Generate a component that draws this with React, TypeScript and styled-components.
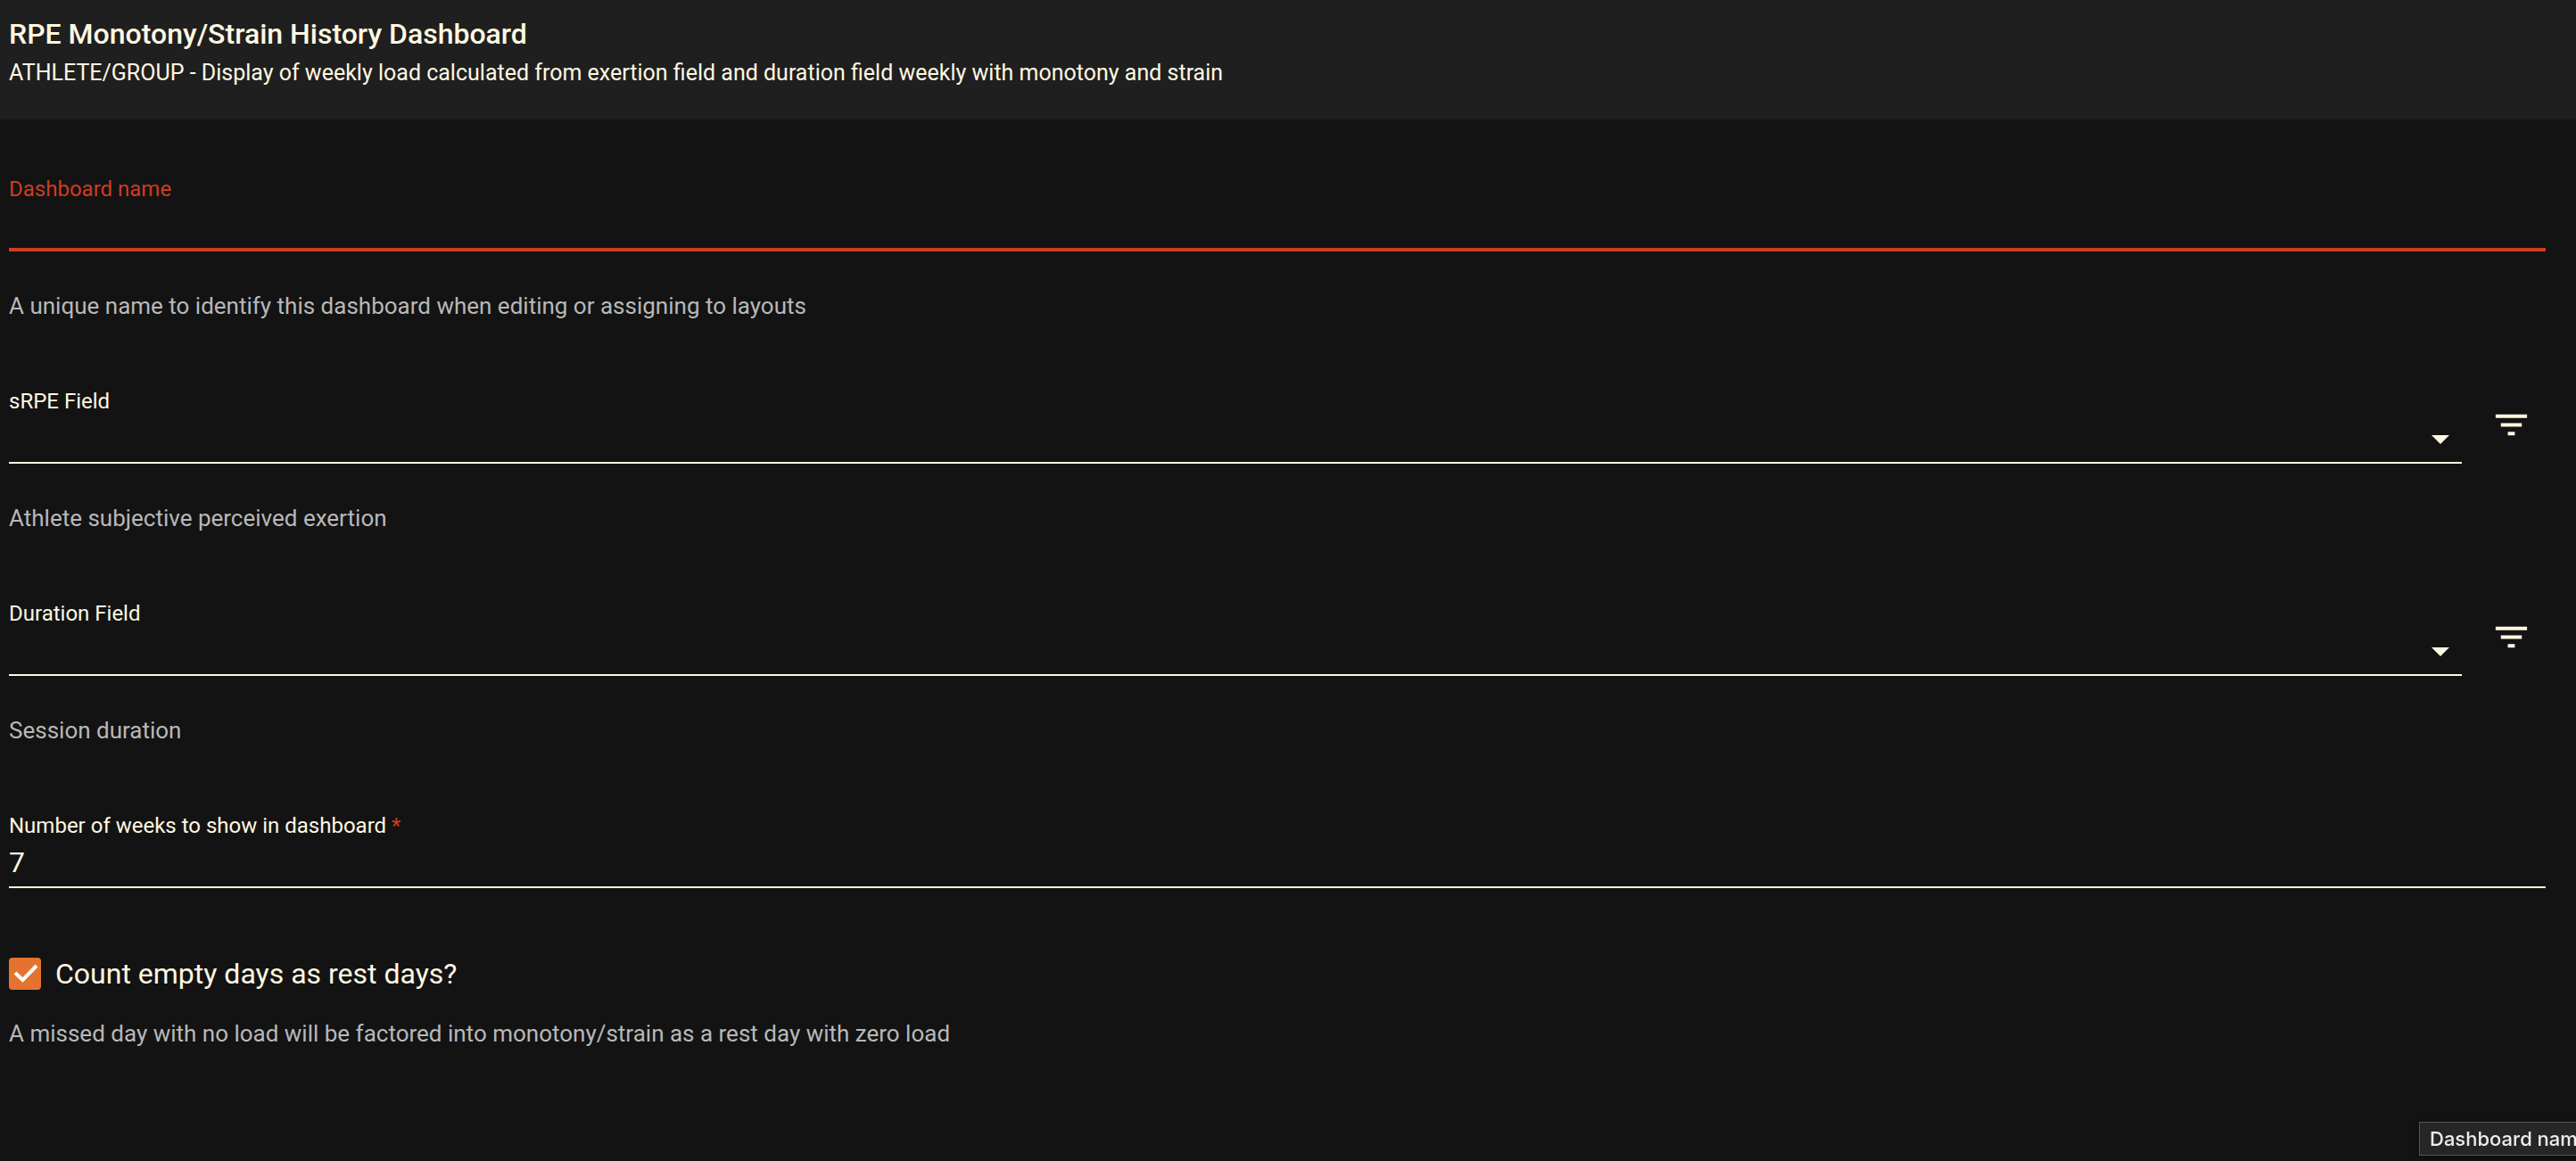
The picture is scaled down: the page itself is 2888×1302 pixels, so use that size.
import React, { useId, useState } from "react";
import styled, { createGlobalStyle, css } from "styled-components";

const color = {
  page: "#131313",
  header: "#1f1f1f",
  text: "#fff8e1",
  muted: "#b8b8b8",
  error: "#cf3c1f",
  accent: "#e57330",
};

const GlobalStyle = createGlobalStyle`
  *, *::before, *::after { box-sizing: border-box; }
  html { background: ${color.page}; }
  body {
    margin: 0;
    min-height: 100vh;
    overflow-x: hidden;
    background: ${color.page};
    color: ${color.text};
    font-family: Roboto, "Liberation Sans", sans-serif;
  }
`;

const Header = styled.header`
  padding: 19px 10px 38px;
  background: ${color.header};
`;

const Title = styled.h1`
  margin: 0 0 11px;
  font-size: 32px;
  line-height: 38px;
  font-weight: 500;
`;

const Subtitle = styled.p`
  margin: 0;
  font-size: 25px;
  line-height: 28px;
`;

const Form = styled.form`
  display: flex;
  flex-direction: column;
  gap: 78px;
  padding: 64px 34px 78px 10px;
`;

const Field = styled.div`
  display: flex;
  flex-direction: column;
`;

const FieldRow = styled.div`
  display: flex;
  align-items: flex-start;
  gap: 16px;
`;

const FieldBody = styled.div`
  display: flex;
  flex: 1;
  flex-direction: column;
`;

const Label = styled.label<{ $invalid?: boolean }>`
  align-self: flex-start;
  font-size: 24px;
  line-height: 28px;
  color: ${(p) => (p.$invalid ? color.error : color.text)};
`;

const Required = styled.span`
  color: ${color.error};
`;

const control = css`
  width: 100%;
  height: 56px;
  margin: 0;
  padding: 0;
  border: 0;
  border-radius: 0;
  outline: none;
  background: transparent;
  color: ${color.text};
  font-family: inherit;
  font-size: 32px;
`;

const TextInput = styled.input<{ $invalid?: boolean }>`
  ${control}
  border-bottom: ${(p) =>
    p.$invalid ? `4px solid ${color.error}` : `2px solid ${color.text}`};
`;

const SelectWrap = styled.div`
  position: relative;
  display: flex;
`;

const Select = styled.select`
  ${control}
  appearance: none;
  border-bottom: 2px solid ${color.text};
  option {
    background: ${color.header};
  }
`;

const Arrow = styled.svg`
  position: absolute;
  right: 14px;
  bottom: 22px;
  width: 20px;
  height: 10px;
  fill: ${color.text};
  pointer-events: none;
`;

const FilterButton = styled.button`
  display: flex;
  align-items: center;
  justify-content: center;
  width: 78px;
  height: 80px;
  padding: 0;
  border: 0;
  border-radius: 50%;
  background: transparent;
  color: ${color.text};
  cursor: pointer;

  svg {
    width: 47px;
    height: 47px;
    fill: currentColor;
  }
`;

const Hint = styled.p<{ $tight?: boolean }>`
  margin: ${(p) => (p.$tight ? "34px" : "46px")} 0 0;
  font-size: 26px;
  line-height: 30px;
  color: ${color.muted};
`;

const CheckLabel = styled.label`
  display: flex;
  align-items: center;
  align-self: flex-start;
  gap: 16px;
  font-size: 32px;
  line-height: 36px;
  cursor: pointer;
`;

const CheckBox = styled.span`
  position: relative;
  display: flex;
  width: 36px;
  height: 36px;

  input {
    width: 36px;
    height: 36px;
    margin: 0;
    appearance: none;
    border: 4px solid ${color.text};
    border-radius: 4px;
  }

  input:checked {
    border-color: ${color.accent};
    background: ${color.accent};
  }

  svg {
    position: absolute;
    inset: 0;
    fill: none;
    stroke: #fff;
    stroke-width: 4;
    pointer-events: none;
  }
`;

const Tooltip = styled.div`
  position: fixed;
  left: calc(100% - 176px);
  bottom: 6px;
  padding: 4px 11px;
  border: 1px solid #555557;
  background: #262628;
  box-shadow: 0 2px 8px rgba(0, 0, 0, 0.4);
  color: #ececec;
  font-family: Inter, "Liberation Sans", sans-serif;
  font-size: 22px;
  line-height: 28px;
  font-weight: 500;
  white-space: nowrap;
`;

function SelectField({ label, hint }: { label: string; hint: string }) {
  const id = useId();
  return (
    <Field>
      <FieldRow>
        <FieldBody>
          <Label htmlFor={id}>{label}</Label>
          <SelectWrap>
            <Select id={id} defaultValue="">
              <option value="" />
            </Select>
            <Arrow viewBox="0 0 20 10" aria-hidden="true">
              <path d="M0 0h20L10 10z" />
            </Arrow>
          </SelectWrap>
        </FieldBody>
        <FilterButton type="button" aria-label={`Filter ${label}`}>
          <svg viewBox="0 0 24 24" aria-hidden="true">
            <path d="M10 18h4v-2h-4v2zM3 6v2h18V6H3zm3 7h12v-2H6v2z" />
          </svg>
        </FilterButton>
      </FieldRow>
      <Hint>{hint}</Hint>
    </Field>
  );
}

export default function App() {
  const [name, setName] = useState("");
  const [weeks, setWeeks] = useState("7");
  const [restDays, setRestDays] = useState(true);

  return (
    <>
      <GlobalStyle />
      <Header>
        <Title>RPE Monotony/Strain History Dashboard</Title>
        <Subtitle>
          ATHLETE/GROUP - Display of weekly load calculated from exertion field
          and duration field weekly with monotony and strain
        </Subtitle>
      </Header>
      <Form>
        <Field>
          <Label htmlFor="dashboard-name" $invalid>
            Dashboard name
          </Label>
          <TextInput
            id="dashboard-name"
            $invalid
            aria-invalid
            value={name}
            onChange={(e) => setName(e.target.value)}
          />
          <Hint>
            A unique name to identify this dashboard when editing or assigning
            to layouts
          </Hint>
        </Field>
        <SelectField
          label="sRPE Field"
          hint="Athlete subjective perceived exertion"
        />
        <SelectField label="Duration Field" hint="Session duration" />
        <Field>
          <Label htmlFor="weeks">
            Number of weeks to show in dashboard <Required>*</Required>
          </Label>
          <TextInput
            id="weeks"
            inputMode="numeric"
            value={weeks}
            onChange={(e) => setWeeks(e.target.value)}
          />
        </Field>
        <Field>
          <CheckLabel>
            <CheckBox>
              <input
                type="checkbox"
                checked={restDays}
                onChange={(e) => setRestDays(e.target.checked)}
              />
              {restDays && (
                <svg viewBox="0 0 36 36" aria-hidden="true">
                  <path d="M7 17l8.500 8L31 9" />
                </svg>
              )}
            </CheckBox>
            Count empty days as rest days?
          </CheckLabel>
          <Hint $tight>
            A missed day with no load will be factored into monotony/strain as a
            rest day with zero load
          </Hint>
        </Field>
      </Form>
      <Tooltip role="tooltip">Dashboard name</Tooltip>
    </>
  );
}
